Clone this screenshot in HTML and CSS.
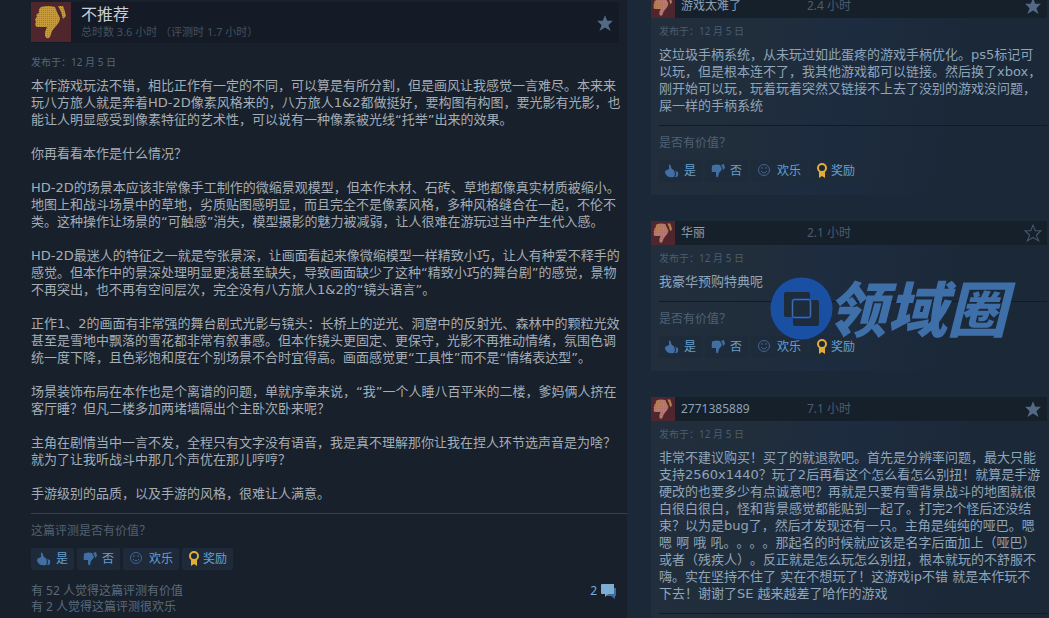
FILE: index.html
```html
<!DOCTYPE html>
<html lang="zh-CN">
<head>
  <meta charset="UTF-8">
  <meta name="viewport" content="width=device-width, initial-scale=1.0">
  <title>评测</title>
  <link rel="stylesheet" href="styles.css">
</head>
<body>
  <!-- 图标 -->
  <svg class="icon-defs" width="0" height="0" aria-hidden="true">
    <defs>
      <pattern id="dots" width="2" height="2" patternUnits="userSpaceOnUse">
        <rect width="2" height="2" fill="#c49a3c"/>
        <rect width="1" height="1" fill="#b06f66"/>
      </pattern>
      <pattern id="dots-pink" width="4" height="4" patternUnits="userSpaceOnUse">
        <rect width="4" height="4" fill="#b2706e"/>
        <rect width="2" height="2" fill="#c08f45"/>
      </pattern>
    </defs>
    <symbol id="hand" viewBox="0 0 40 40">
      <path d="M10 5 Q17 3 24 5 L26 10 L29 16 Q29 20 25 24 L21 29 L19 35 Q16 38 14 34 L14 30 L16 25 L6 25 Q3 23 5 20 Q3 17 6 15 Q4 12 8 11 Q7 7 10 5Z"/>
      <path d="M27 4 L32 4 Q34 9 35 14 L32 17 Q31 10 27 4Z"/>
    </symbol>
    <symbol id="up" viewBox="0 0 14 14">
      <path d="M4 0.500 Q6 0 6 3 L7 5 Q8 6 9 6 L10 10 L9 13 Q5 14 2 12 L0 9 Q0 6 2 6 L4 5Z"/>
      <path d="M10 7 L13 8 Q14 11 12 13 L10 13 Q12 10 10 7Z"/>
    </symbol>
    <symbol id="down" viewBox="0 0 14 14">
      <path d="M2 1 Q6 0 9 1 L11 5 Q10 7 8 9 L7 13 Q5 14 5 11 L5 8 L1 8 Q0 7 1 6 Q0 4 1 4 Q0 2 2 1Z"/>
      <path d="M10 1 L13 0 L14 4 L12 6 Q12 3 10 1Z"/>
    </symbol>
    <symbol id="smile" viewBox="0 1 14 14">
      <circle cx="7" cy="7" r="5.500" fill="none" stroke="currentColor"/>
      <path d="M5 4V6M9 4V6M4 8Q7 12 10 8" fill="none" stroke="currentColor"/>
    </symbol>
    <symbol id="medal" viewBox="0 0 12 16">
      <path d="M3 9 L3 15 L6 13 L9 15 L9 9Z"/>
      <circle cx="6" cy="5" r="4" fill="#1b2636" stroke="currentColor" stroke-width="2"/>
    </symbol>
    <symbol id="star" viewBox="0 0 16 16">
      <path d="M8 1 L10 6 L15 6 L11 10 L13 15 L8 12 L3 15 L5 10 L1 6 L6 6Z"/>
    </symbol>
  </svg>

  <div class="page">
    <main class="detail">
      <header class="detail-head">
        <span class="thumb thumb-lg"><svg><use href="#hand"/></svg></span>
        <div class="detail-title">
          <h1>不推荐</h1>
          <p>总时数 3.6 小时 （评测时 1.7 小时）</p>
        </div>
        <svg class="star"><use href="#star"/></svg>
      </header>

      <div class="posted">发布于：12 月 5 日</div>
      <div class="review-text">
        <p>本作游戏玩法不错，相比正作有一定的不同，可以算是有所分割，但是画风让我感觉一言难尽。本来来玩八方旅人就是奔着HD-2D像素风格来的，八方旅人1&amp;2都做挺好，要构图有构图，要光影有光影，也能让人明显感受到像素特征的艺术性，可以说有一种像素被光线“托举”出来的效果。</p>
        <p>你再看看本作是什么情况？</p>
        <p>HD-2D的场景本应该非常像手工制作的微缩景观模型，但本作木材、石砖、草地都像真实材质被缩小。地图上和战斗场景中的草地，劣质贴图感明显，而且完全不是像素风格，多种风格缝合在一起，不伦不类。这种操作让场景的“可触感”消失，模型摄影的魅力被减弱，让人很难在游玩过当中产生代入感。</p>
        <p>HD-2D最迷人的特征之一就是夸张景深，让画面看起来像微缩模型一样精致小巧，让人有种爱不释手的感觉。但本作中的景深处理明显更浅甚至缺失，导致画面缺少了这种“精致小巧的舞台剧”的感觉，景物不再突出，也不再有空间层次，完全没有八方旅人1&amp;2的“镜头语言”。</p>
        <p>正作1、2的画面有非常强的舞台剧式光影与镜头：长桥上的逆光、洞窟中的反射光、森林中的颗粒光效甚至是雪地中飘落的雪花都非常有叙事感。但本作镜头更固定、更保守，光影不再推动情绪，氛围色调统一度下降，且色彩饱和度在个别场景不合时宜得高。画面感觉更“工具性”而不是“情绪表达型”。</p>
        <p>场景装饰布局在本作也是个离谱的问题，单就序章来说，“我”一个人睡八百平米的二楼，爹妈俩人挤在客厅睡？但凡二楼多加两堵墙隔出个主卧次卧来呢？</p>
        <p>主角在剧情当中一言不发，全程只有文字没有语音，我是真不理解那你让我在捏人环节选声音是为啥？就为了让我听战斗中那几个声优在那儿哼哼？</p>
        <p>手游级别的品质，以及手游的风格，很难让人满意。</p>
      </div>

      <div class="rate">
        <div class="question">这篇评测是否有价值？</div>
        <div class="votes">
          <button type="button"><svg class="i-hand"><use href="#up"/></svg>是</button>
          <button type="button"><svg class="i-hand"><use href="#down"/></svg>否</button>
          <button type="button" class="wide"><svg class="i-smile"><use href="#smile"/></svg>欢乐</button>
          <button type="button" class="award"><svg class="i-medal"><use href="#medal"/></svg>奖励</button>
        </div>
      </div>
      <div class="stats">
        <div>有 52 人觉得这篇评测有价值<br>有 2 人觉得这篇评测很欢乐</div>
        <a class="comments" href="#">2
          <svg viewBox="0 0 16 16"><path d="M6 5H15V13H14V16L10 13H6Z" fill="#3d6b9e"/><path d="M1 1H13V11H7L4 14V11H1Q0 11 0 10V2Q0 1 1 1Z" fill="#7cadd2"/></svg>
        </a>
      </div>
    </main>

    <aside class="recent">
      <article class="card">
        <header class="card-head">
          <span class="thumb"><svg><use href="#hand"/></svg></span>
          <a class="name" href="#">游戏太难了</a>
          <span class="hours">2.4 小时</span>
          <svg class="star"><use href="#star"/></svg>
        </header>
        <div class="card-body">
          <div class="posted">发布于：12 月 5 日</div>
          <p class="card-text">这垃圾手柄系统，从未玩过如此蛋疼的游戏手柄优化。ps5标记可以玩，但是根本连不了，我其他游戏都可以链接。然后换了xbox，刚开始可以玩，玩着玩着突然又链接不上去了没别的游戏没问题，屎一样的手柄系统</p>
          <div class="rate">
            <div class="question">是否有价值？</div>
            <div class="votes">
              <button type="button"><svg class="i-hand"><use href="#up"/></svg>是</button>
              <button type="button"><svg class="i-hand"><use href="#down"/></svg>否</button>
              <button type="button" class="wide"><svg class="i-smile"><use href="#smile"/></svg>欢乐</button>
              <button type="button" class="award"><svg class="i-medal"><use href="#medal"/></svg>奖励</button>
            </div>
          </div>
        </div>
      </article>

      <article class="card">
        <header class="card-head">
          <span class="thumb"><svg><use href="#hand"/></svg></span>
          <a class="name" href="#">华丽</a>
          <span class="hours">2.1 小时</span>
          <svg class="star star-empty"><use href="#star"/></svg>
        </header>
        <div class="card-body">
          <div class="posted">发布于：12 月 5 日</div>
          <p class="card-text">我豪华预购特典呢</p>
          <div class="rate">
            <div class="question">是否有价值？</div>
            <div class="votes">
              <button type="button"><svg class="i-hand"><use href="#up"/></svg>是</button>
              <button type="button"><svg class="i-hand"><use href="#down"/></svg>否</button>
              <button type="button" class="wide"><svg class="i-smile"><use href="#smile"/></svg>欢乐</button>
              <button type="button" class="award"><svg class="i-medal"><use href="#medal"/></svg>奖励</button>
            </div>
          </div>
        </div>
        <!-- 水印 -->
        <div class="watermark">
          <svg viewBox="0 0 63 63">
            <circle cx="31.500" cy="31.500" r="31" fill="#1a50a3"/>
            <rect x="14" y="15" width="26" height="25" rx="2" fill="#1e2b3b"/>
            <rect x="23" y="23" width="26" height="26" rx="2" fill="#1e2b3b"/>
            <rect x="22.500" y="22.500" width="18" height="18" rx="2" fill="#1e2b3b" stroke="#1a50a3" stroke-width="2"/>
            <rect x="22.500" y="22.500" width="18" height="18" rx="2" fill="none" stroke="#3e6fa8"/>
          </svg>
          <span>领域圈</span>
        </div>
      </article>

      <article class="card">
        <header class="card-head">
          <span class="thumb"><svg><use href="#hand"/></svg></span>
          <a class="name" href="#">2771385889</a>
          <span class="hours">7.1 小时</span>
          <svg class="star"><use href="#star"/></svg>
        </header>
        <div class="card-body">
          <div class="posted">发布于：12 月 5 日</div>
          <p class="card-text">非常不建议购买！买了的就退款吧。首先是分辨率问题，最大只能支持2560x1440？玩了2后再看这个怎么看怎么别扭！就算是手游硬改的也要多少有点诚意吧？再就是只要有雪背景战斗的地图就很白很白很白，怪和背景感觉都能贴到一起了。打完2个怪后还没结束？以为是bug了，然后才发现还有一只。主角是纯纯的哑巴。嗯嗯 啊 哦 吼。。。。那起名的时候就应该是名字后面加上（哑巴）或者（残疾人）。反正就是怎么玩怎么别扭，根本就玩的不舒服不嗨。实在坚持不住了 实在不想玩了！这游戏ip不错 就是本作玩不下去！谢谢了SE 越来越差了哈作的游戏</p>
          <div class="rate"></div>
        </div>
      </article>
    </aside>
  </div>
</body>
</html>
```

FILE: styles.css
```css
* { box-sizing: border-box; }

body {
  margin: 0;
  height: 100vh;
  overflow: hidden;
  background: #1b2838;
  font-family: "Noto Sans", "Noto Sans CJK SC", sans-serif;
  font-size: 12px;
  line-height: 16px;
  text-spacing-trim: space-all;
  color: #a5adb6;
}

h1, p { margin: 0; }
a { color: inherit; text-decoration: none; }
svg { display: block; fill: currentColor; flex: none; }
.icon-defs { position: absolute; }

.page {
  display: grid;
  grid-template-columns: minmax(0, 1fr) 396px;
  gap: 24px;
  height: 100vh;
  padding-right: 2px;
}

/* 左侧评测 */
.detail {
  background: #17202b;
  padding: 2px 0 0 31px;
}

.detail-head {
  display: flex;
  align-items: flex-start;
  gap: 10px;
  height: 41px;
  margin-right: 8px;
  padding-right: 5px;
  background: #141b26;
  border-radius: 2px;
}
.detail-head .star { align-self: center; }

.detail-title { flex: 1; }
.detail-title h1 {
  font-size: 16px;
  font-weight: 400;
  line-height: 24px;
  color: #c8ced4;
}
.detail-title p {
  font-size: 11px;
  line-height: 12px;
  color: #435160;
}

.thumb {
  display: flex;
  width: 24px;
  height: 24px;
  background: #4f262d;
}
.thumb svg { width: 100%; height: 100%; fill: url(#dots-pink); }
.thumb-lg { width: 40px; height: 40px; }
.thumb-lg svg { fill: url(#dots); }

.star { width: 18px; height: 18px; color: #526a86; }
.star-empty { fill: none; stroke: #43566c; }

.posted {
  font-size: 10px;
  line-height: 14px;
  color: #56677a;
}
.detail .posted { margin-top: 12px; }

.review-text {
  margin: 8px 4px 11px 0;
  font-family: "DejaVu Sans", "Noto Sans CJK SC", sans-serif;
  font-size: 13px;
  line-height: 17px;
}
.review-text p + p { margin-top: 17px; }

.rate { border-top: 1px solid #34424f; }
.question {
  padding-top: 9px;
  color: #53606e;
}

.votes {
  display: flex;
  gap: 3px;
  margin-top: 9px;
}
.votes button {
  display: flex;
  align-items: center;
  gap: 5px;
  height: 22px;
  padding: 0 6px;
  border: 0;
  border-radius: 2px;
  background: #1e2a3a;
  color: #67a0cf;
  font: inherit;
  cursor: pointer;
}
.votes .wide { gap: 6px; }
.votes .award { gap: 3px; }
.i-hand { width: 14px; height: 14px; color: #416ea3; }
.i-smile { width: 14px; height: 14px; color: #3f6590; }
.i-medal { width: 12px; height: 16px; color: #e2ae37; }

.stats {
  display: flex;
  justify-content: space-between;
  margin: 13px 10px 0 0;
  color: #5b6b7c;
}
.comments {
  display: flex;
  align-items: center;
  align-self: flex-start;
  gap: 4px;
  color: #7cadd2;
}
.comments svg { width: 16px; height: 16px; }

/* 右侧最新评测 */
.recent {
  display: flex;
  flex-direction: column;
  gap: 26px;
  margin-top: -6px;
}

.card {
  position: relative;
  background: linear-gradient(100deg, #222e3b 0%, #202d3b 28%, #1d2c40 45%, #1b2838 75%);
}

.card-head {
  display: grid;
  grid-template-columns: 24px 120px 1fr 18px;
  align-items: center;
  column-gap: 6px;
  height: 24px;
  padding-right: 5px;
  background: #16202b;
}
.name { color: #8ba2b8; }
.hours { color: #4a5c70; }

.card-body { padding: 6px 0 13px 8px; }
.card-body .posted { color: #4a5d71; }

.card-text {
  margin: 8px 5px 11px 0;
  font-family: "DejaVu Sans", "Noto Sans CJK SC", sans-serif;
  font-size: 13px;
  line-height: 17px;
  color: #8fa5ba;
}

.card .rate { border-color: #111b27; }
.card .question { color: #4f6175; }
.card .votes button { background: #1e2b3b; }

.watermark {
  position: absolute;
  left: 119px;
  top: 56px;
  display: flex;
  align-items: center;
  color: #3f6fa8;
  font-size: 60px;
  font-style: italic;
  font-weight: 900;
  line-height: 48px;
  white-space: nowrap;
  pointer-events: none;
}
.watermark svg { width: 63px; height: 63px; }
.watermark span { margin-left: -6px; }
```
